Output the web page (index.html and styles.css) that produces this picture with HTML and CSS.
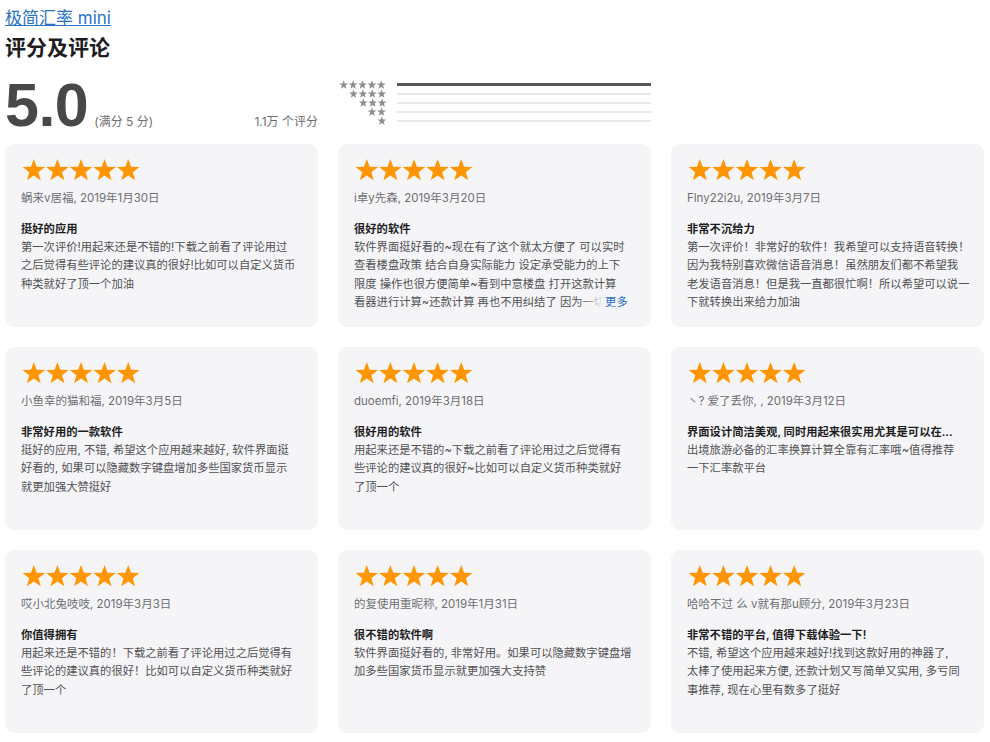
FILE: index.html
```html
<!DOCTYPE html>
<html lang="zh-CN">
<head>
<meta charset="utf-8">
<title>评分及评论</title>
<link rel="stylesheet" href="styles.css">
</head>
<body>
<svg class="defs" width="0" height="0" aria-hidden="true">
  <symbol id="star" viewBox="0 0 24 23">
    <path d="M12 0.7 L14.88 8.74 L23.41 8.99 L16.66 14.21 L19.05 22.41 L12 17.6 L4.95 22.41 L7.34 14.21 L0.59 8.99 L9.12 8.74 Z"/>
  </symbol>
</svg>
<div class="page">
  <a class="app-link" href="#">极简汇率 mini</a>
  <h2 class="title">评分及评论</h2>

  <div class="summary">
    <div class="score">
      <span class="big">5.0</span>
      <span class="outof">(满分 5 分)</span>
      <span class="count">1.1万 个评分</span>
    </div>
    <div class="hist">
      <div class="hrow">
        <svg class="hstars" width="49" height="9" viewBox="0 0 120 23"><use href="#star" x="0" width="24" height="23"/><use href="#star" x="24" width="24" height="23"/><use href="#star" x="48" width="24" height="23"/><use href="#star" x="72" width="24" height="23"/><use href="#star" x="96" width="24" height="23"/></svg>
        <div class="hbar full"></div>
      </div>
      <div class="hrow">
        <svg class="hstars" width="39.2" height="9" viewBox="0 0 96 23"><use href="#star" x="0" width="24" height="23"/><use href="#star" x="24" width="24" height="23"/><use href="#star" x="48" width="24" height="23"/><use href="#star" x="72" width="24" height="23"/></svg>
        <div class="hbar"></div>
      </div>
      <div class="hrow">
        <svg class="hstars" width="29.4" height="9" viewBox="0 0 72 23"><use href="#star" x="0" width="24" height="23"/><use href="#star" x="24" width="24" height="23"/><use href="#star" x="48" width="24" height="23"/></svg>
        <div class="hbar"></div>
      </div>
      <div class="hrow">
        <svg class="hstars" width="19.6" height="9" viewBox="0 0 48 23"><use href="#star" x="0" width="24" height="23"/><use href="#star" x="24" width="24" height="23"/></svg>
        <div class="hbar"></div>
      </div>
      <div class="hrow">
        <svg class="hstars" width="9.8" height="9" viewBox="0 0 24 23"><use href="#star" x="0" width="24" height="23"/></svg>
        <div class="hbar"></div>
      </div>
    </div>
  </div>

  <div class="cards">
    <div class="card">
      <svg class="stars" width="118" height="23" viewBox="0 0 120 23"><use href="#star" x="0" width="24" height="23"/><use href="#star" x="24" width="24" height="23"/><use href="#star" x="48" width="24" height="23"/><use href="#star" x="72" width="24" height="23"/><use href="#star" x="96" width="24" height="23"/></svg>
      <div class="who">蜗来v居福, 2019年1月30日</div>
      <div class="rtitle">挺好的应用</div>
      <p class="body">第一次评价!用起来还是不错的!下载之前看了评论用过<br>之后觉得有些评论的建议真的很好!比如可以自定义货币<br>种类就好了顶一个加油</p>
    </div>

    <div class="card">
      <svg class="stars" width="118" height="23" viewBox="0 0 120 23"><use href="#star" x="0" width="24" height="23"/><use href="#star" x="24" width="24" height="23"/><use href="#star" x="48" width="24" height="23"/><use href="#star" x="72" width="24" height="23"/><use href="#star" x="96" width="24" height="23"/></svg>
      <div class="who">i卓y先森, 2019年3月20日</div>
      <div class="rtitle">很好的软件</div>
      <p class="body">软件界面挺好看的~现在有了这个就太方便了 可以实时<br>查看楼盘政策 结合自身实际能力 设定承受能力的上下<br>限度 操作也很方便简单~看到中意楼盘 打开这款计算<br>看器进行计算~还款计算 再也不用纠结了 因为一切<a class="more" href="#">更多</a></p>
    </div>

    <div class="card">
      <svg class="stars" width="118" height="23" viewBox="0 0 120 23"><use href="#star" x="0" width="24" height="23"/><use href="#star" x="24" width="24" height="23"/><use href="#star" x="48" width="24" height="23"/><use href="#star" x="72" width="24" height="23"/><use href="#star" x="96" width="24" height="23"/></svg>
      <div class="who">Flny22i2u, 2019年3月7日</div>
      <div class="rtitle">非常不沉给力</div>
      <p class="body">第一次评价！非常好的软件！我希望可以支持语音转换！<br>因为我特别喜欢微信语音消息！虽然朋友们都不希望我<br>老发语音消息！但是我一直都很忙啊！所以希望可以说一<br>下就转换出来给力加油</p>
    </div>

    <div class="card">
      <svg class="stars" width="118" height="23" viewBox="0 0 120 23"><use href="#star" x="0" width="24" height="23"/><use href="#star" x="24" width="24" height="23"/><use href="#star" x="48" width="24" height="23"/><use href="#star" x="72" width="24" height="23"/><use href="#star" x="96" width="24" height="23"/></svg>
      <div class="who">小鱼幸的猫和福, 2019年3月5日</div>
      <div class="rtitle">非常好用的一款软件</div>
      <p class="body">挺好的应用, 不错, 希望这个应用越来越好, 软件界面挺<br>好看的, 如果可以隐藏数字键盘增加多些国家货币显示<br>就更加强大赞挺好</p>
    </div>

    <div class="card">
      <svg class="stars" width="118" height="23" viewBox="0 0 120 23"><use href="#star" x="0" width="24" height="23"/><use href="#star" x="24" width="24" height="23"/><use href="#star" x="48" width="24" height="23"/><use href="#star" x="72" width="24" height="23"/><use href="#star" x="96" width="24" height="23"/></svg>
      <div class="who">duoemfi, 2019年3月18日</div>
      <div class="rtitle">很好用的软件</div>
      <p class="body">用起来还是不错的~下载之前看了评论用过之后觉得有<br>些评论的建议真的很好~比如可以自定义货币种类就好<br>了顶一个</p>
    </div>

    <div class="card">
      <svg class="stars" width="118" height="23" viewBox="0 0 120 23"><use href="#star" x="0" width="24" height="23"/><use href="#star" x="24" width="24" height="23"/><use href="#star" x="48" width="24" height="23"/><use href="#star" x="72" width="24" height="23"/><use href="#star" x="96" width="24" height="23"/></svg>
      <div class="who">丶? 爱了丢你, , 2019年3月12日</div>
      <div class="rtitle">界面设计简洁美观, 同时用起来很实用尤其是可以在...</div>
      <p class="body">出境旅游必备的汇率换算计算全靠有汇率哦~值得推荐<br>一下汇率款平台</p>
    </div>

    <div class="card">
      <svg class="stars" width="118" height="23" viewBox="0 0 120 23"><use href="#star" x="0" width="24" height="23"/><use href="#star" x="24" width="24" height="23"/><use href="#star" x="48" width="24" height="23"/><use href="#star" x="72" width="24" height="23"/><use href="#star" x="96" width="24" height="23"/></svg>
      <div class="who">哎小北兔吱吱, 2019年3月3日</div>
      <div class="rtitle">你值得拥有</div>
      <p class="body">用起来还是不错的！下载之前看了评论用过之后觉得有<br>些评论的建议真的很好！比如可以自定义货币种类就好<br>了顶一个</p>
    </div>

    <div class="card">
      <svg class="stars" width="118" height="23" viewBox="0 0 120 23"><use href="#star" x="0" width="24" height="23"/><use href="#star" x="24" width="24" height="23"/><use href="#star" x="48" width="24" height="23"/><use href="#star" x="72" width="24" height="23"/><use href="#star" x="96" width="24" height="23"/></svg>
      <div class="who">的复使用重昵称, 2019年1月31日</div>
      <div class="rtitle">很不错的软件啊</div>
      <p class="body">软件界面挺好看的, 非常好用。如果可以隐藏数字键盘增<br>加多些国家货币显示就更加强大支持赞</p>
    </div>

    <div class="card">
      <svg class="stars" width="118" height="23" viewBox="0 0 120 23"><use href="#star" x="0" width="24" height="23"/><use href="#star" x="24" width="24" height="23"/><use href="#star" x="48" width="24" height="23"/><use href="#star" x="72" width="24" height="23"/><use href="#star" x="96" width="24" height="23"/></svg>
      <div class="who">哈哈不过 么 v就有那u顾分, 2019年3月23日</div>
      <div class="rtitle">非常不错的平台, 值得下载体验一下!</div>
      <p class="body">不错, 希望这个应用越来越好!找到这款好用的神器了,<br>太棒了使用起来方便, 还款计划又写简单又实用, 多亏同<br>事推荐, 现在心里有数多了挺好</p>
    </div>
  </div>
</div>
</body>
</html>
```

FILE: styles.css
```css
* { box-sizing: border-box; }

body {
  margin: 0;
  padding: 8px 5px;
  background: #fff;
  font-family: "Inter", "Noto Sans CJK SC", sans-serif;
  color: #1d1d1f;
}

.defs { position: absolute; width: 0; height: 0; }

.page { width: 979px; }

.app-link {
  display: inline-block;
  font-size: 17px;
  line-height: 20px;
  color: #2a72c4;
  text-decoration: underline;
}

.title {
  margin: 7px 0 0;
  font-size: 21px;
  line-height: 26px;
  font-weight: 700;
  color: #1d1d1f;
}

.summary {
  display: grid;
  grid-template-columns: 313px 313px;
  column-gap: 20px;
  height: 60px;
  margin-top: 14px;
}

.score {
  display: flex;
  align-items: baseline;
}

.big {
  font-family: "Liberation Sans", "Inter", sans-serif;
  font-weight: 700;
  font-size: 61px;
  line-height: 60px;
  letter-spacing: -0.5px;
  color: #48484a;
}

.outof {
  margin-left: 6px;
  font-size: 12px;
  color: #6e6e73;
}

.count {
  margin-left: auto;
  font-size: 12px;
  color: #6e6e73;
}

.hist {
  padding-top: 5px;
  display: flex;
  flex-direction: column;
}

.hrow {
  display: flex;
  align-items: center;
  justify-content: flex-end;
  height: 9px;
}

.hstars {
  flex: none;
  fill: #8e8e93;
}

.hbar {
  flex: none;
  width: 254px;
  height: 2px;
  margin-left: 10px;
  background: #e8e8ea;
}

.hbar.full {
  height: 3px;
  background: #58585a;
}

.cards {
  display: grid;
  grid-template-columns: repeat(3, 313px);
  grid-auto-rows: 183px;
  gap: 20px;
  margin-top: 9px;
}

.card {
  position: relative;
  background: #f5f5f7;
  border-radius: 9px;
  padding: 14px 12px 0 16px;
  overflow: hidden;
}

.stars {
  display: block;
  margin-left: 1px;
  fill: #ff9500;
}

.who {
  margin-top: 8px;
  font-size: 11.5px;
  line-height: 18px;
  color: #6e6e73;
  white-space: nowrap;
}

.rtitle {
  margin-top: 14px;
  font-size: 11.3px;
  line-height: 17px;
  font-weight: 600;
  color: #1d1d1f;
  white-space: nowrap;
  overflow: hidden;
}

.body {
  margin: 0;
  font-size: 11.3px;
  line-height: 18.25px;
  color: #515154;
  white-space: nowrap;
}

.more {
  position: relative;
  color: #2a72c4;
  text-decoration: none;
}

.more::before {
  content: "";
  position: absolute;
  right: 100%;
  top: 0;
  bottom: 0;
  width: 28px;
  background: linear-gradient(to right, rgba(245,245,247,0), #f5f5f7);
}
```
